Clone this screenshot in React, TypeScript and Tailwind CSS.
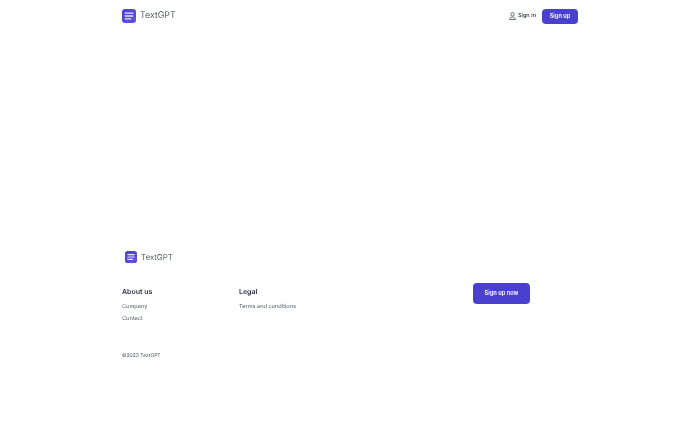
function Logo({ size }: { size: number }) {
  return (
    <svg width={size} height={size} viewBox="0 0 14 14" className="shrink-0">
      <defs>
        <linearGradient id="lg" x1="0" y1="0" x2="1" y2="1">
          <stop offset="0" stopColor="#4a40d0" />
          <stop offset="1" stopColor="#6650dc" />
        </linearGradient>
      </defs>
      <rect width="14" height="14" rx="3" fill="url(#lg)" />
      <path d="M3.2 4.2h7.6M3.2 7h7.6M3.2 9.8h5.6" stroke="#e6e4fb" strokeWidth="1.3" strokeLinecap="round" />
    </svg>
  );
}

export default function App() {
  return (
    <div className="h-[438px] w-[700px] bg-white font-['Inter',sans-serif] antialiased [text-rendering:geometricPrecision]">
      <div className="ml-[122px] w-[456px] will-change-transform">
        <header className="flex h-[31px] items-center justify-between">
          <div className="flex items-center gap-[4px]">
            <Logo size={14} />
            <span className="text-[9px] leading-none font-light text-[#1f2937]">TextGPT</span>
          </div>
          <div className="mt-[1px] flex items-center gap-[6px]">
            <div className="flex items-center gap-[2px] text-[#1f2937]">
              <svg width="7" height="8" viewBox="0 0 21 24" fill="none" stroke="currentColor" strokeWidth="2">
                <circle cx="10.5" cy="7" r="5" />
                <path d="M2 22.5c0-5 4-7.5 8.5-7.5s8.5 2.5 8.5 7.5z" />
              </svg>
              <span className="text-[5.6px] font-medium">Sign in</span>
            </div>
            <button className="h-[15px] w-[36px] rounded-[4px] bg-[#4a40d0] text-[5.7px] font-semibold text-white">Sign up</button>
          </div>
        </header>
        <main className="h-[219px]" />
        <footer>
          <div className="ml-[3px] flex h-[14px] items-center gap-[4px]">
            <Logo size={12} />
            <span className="text-[8px] leading-none font-light text-[#1f2937]">TextGPT</span>
          </div>
          <div className="mt-[22px] flex items-start">
            <div className="w-[117px]">
              <h3 className="text-[7px] leading-[12px] font-semibold text-[#1f2937]">About us</h3>
              <p className="mt-[4px] text-[5.6px] leading-[10px] text-[#4b5563]">Company</p>
              <p className="mt-[2px] text-[5.6px] leading-[10px] text-[#4b5563]">Contact</p>
            </div>
            <div className="w-[234px]">
              <h3 className="text-[7px] leading-[12px] font-semibold text-[#1f2937]">Legal</h3>
              <p className="mt-[4px] text-[5.6px] leading-[10px] text-[#4b5563]">Terms and conditions</p>
            </div>
            <button className="-mt-[3px] h-[21px] w-[57px] rounded-[4px] bg-[#4a40d0] text-[5.7px] font-semibold text-white">Sign up now</button>
          </div>
          <p className="mt-[28px] text-[5px] leading-[8px] text-[#4b5563]">©2023 TextGPT</p>
        </footer>
      </div>
    </div>
  );
}
